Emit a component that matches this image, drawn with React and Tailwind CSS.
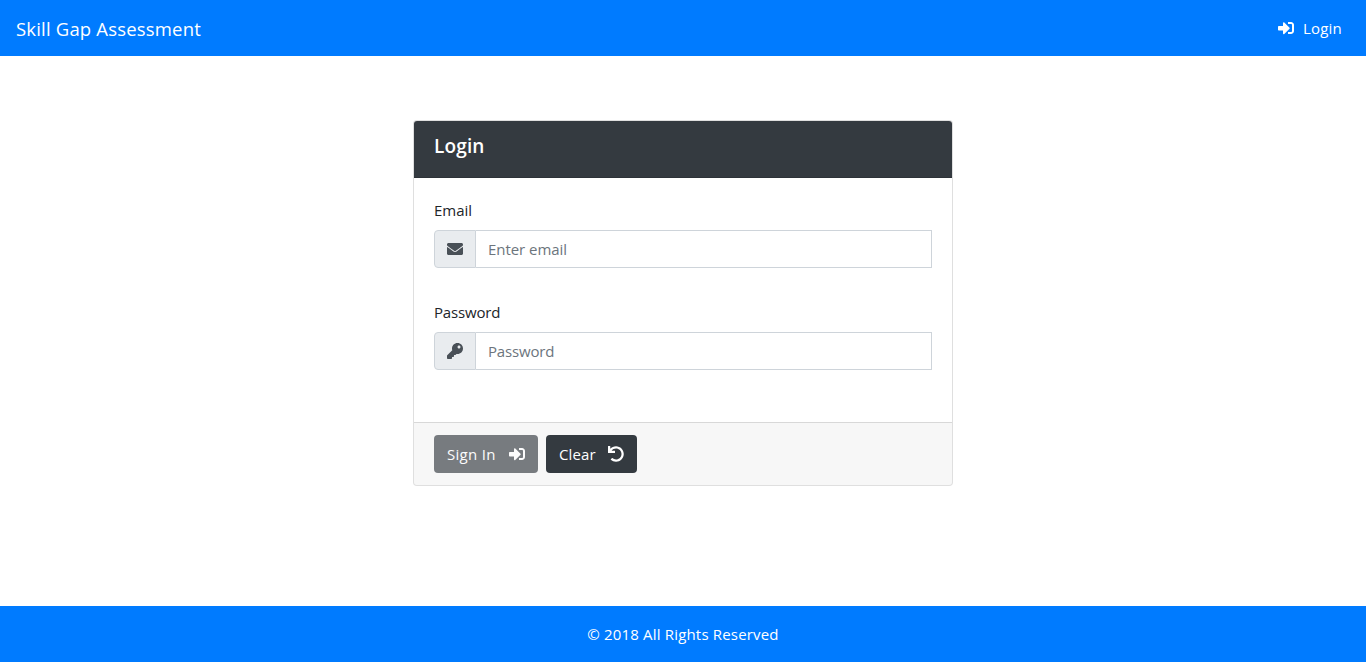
import { FaSignInAlt, FaEnvelope, FaKey, FaUndo } from 'react-icons/fa';

function Field({ id, label, type, placeholder, icon, labelClass, inputClass }) {
  return (
    <div>
      <label htmlFor={id} className={`mb-2 block h-6 leading-6 ${labelClass}`}>{label}</label>
      <div className="flex h-[38px]">
        <span className="flex w-[42px] items-center justify-center rounded-l border border-[#ced4da] bg-[#e9ecef] text-[#495057]">
          {icon}
        </span>
        <input
          id={id}
          type={type}
          placeholder={placeholder}
          className={`min-w-0 flex-1 border border-l-0 border-[#ced4da] bg-white px-3 placeholder:text-[#6c757d] focus:outline-none ${inputClass}`}
        />
      </div>
    </div>
  );
}

export default function App() {
  return (
    <div className="flex h-[662px] flex-col bg-white font-['Open_Sans','Noto_Sans',sans-serif] text-[15px] text-[#212529]">
      <nav className="flex h-14 items-center justify-between bg-[#007bff] pl-4 pr-6 text-white">
        <a href="#" className="pt-0.5 text-[18.5px] leading-[30px] tracking-[0.18px]">Skill Gap Assessment</a>
        <a href="#" className="flex items-center gap-[9px] leading-6">
          <FaSignInAlt size={16} />
          <span className="tracking-[0.2px]">Login</span>
        </a>
      </nav>

      <main className="flex flex-1 justify-center pt-16">
        <form className="flex h-[366px] w-[540px] flex-col overflow-hidden rounded border border-black/[.125] bg-white bg-clip-border">
          <div className="h-[57px] border-b border-black/[.125] bg-[#343a40] px-5 pt-[13px] text-white">
            <h5 className="text-[19px] font-semibold leading-6 tracking-[0.15px]">Login</h5>
          </div>
          <div className="flex flex-1 flex-col gap-8 px-5 pt-5">
            <Field id="email" label="Email" type="email" placeholder="Enter email" icon={<FaEnvelope size={16} />} labelClass="" inputClass="tracking-[-0.05px]" />
            <Field id="password" label="Password" type="password" placeholder="Password" icon={<FaKey size={16} />} labelClass="tracking-[-0.18px]" inputClass="tracking-[-0.18px]" />
          </div>
          <div className="flex h-[63px] gap-2 border-t border-black/[.125] bg-black/[.03] px-5 pt-3">
            <button type="button" disabled className="flex h-[38px] w-[104px] items-center justify-between rounded bg-[#343a40] px-[13px] text-white opacity-65">
              <span className="tracking-[0.3px]">Sign In</span>
              <FaSignInAlt size={16} />
            </button>
            <button type="button" className="flex h-[38px] w-[91px] items-center justify-between rounded bg-[#343a40] px-[13px] text-white">
              <span className="tracking-[0.15px]">Clear</span>
              <FaUndo size={16} />
            </button>
          </div>
        </form>
      </main>

      <footer className="flex h-14 items-center justify-center bg-[#007bff] text-white">
        <span className="tracking-[0.18px]">© 2018 All Rights Reserved</span>
      </footer>
    </div>
  );
}
